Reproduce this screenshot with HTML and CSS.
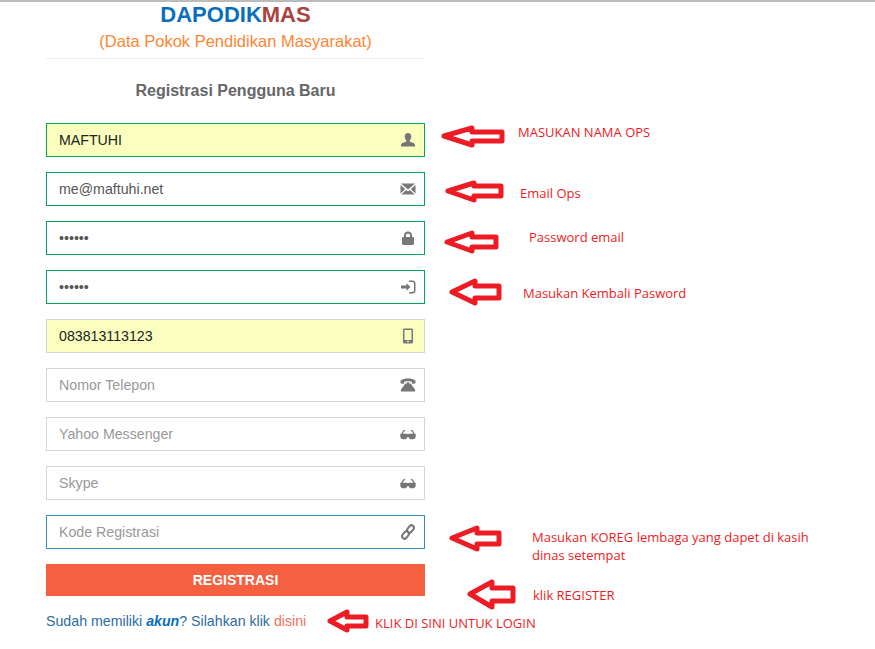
FILE: index.html
```html
<!DOCTYPE html>
<html lang="en">
<head>
    <meta charset="UTF-8">
    <title>Registrasi Pengguna Baru | DAPODIKMAS</title>
    <link rel="stylesheet" href="styles.css">
</head>
<body>
    <div class="page">
        <div class="register-box">
            <div class="logo">
                <div class="logo-name"><span class="blue">DAPODIK</span><span class="maroon">MAS</span></div>
                <div class="logo-sub">(Data Pokok Pendidikan Masyarakat)</div>
            </div>
            <h2 class="box-title">Registrasi Pengguna Baru</h2>

            <div class="form-group">
                <input class="valid autofill" type="text" value="MAFTUHI">
                <svg class="icon" viewBox="0 0 16 16"><path d="M8 1c2.200 0 3.300 1.600 3.300 3.600 0 1.600-.7 3-1.500 3.800v1.300c2 .7 5.200 1.200 5.200 3.300v1.500H1v-1.500c0-2.100 3.200-2.600 5.200-3.300V8.400C5.400 7.600 4.700 6.200 4.700 4.600 4.700 2.600 5.800 1 8 1z"/></svg>
            </div>
            <div class="form-group">
                <input class="valid" type="text" value="me@maftuhi.net">
                <svg class="icon" viewBox="0 0 16 16"><path d="M1 2.500h14L8 8.500zM.5 4v8.500l4.700-4.400zM15.500 4v8.500l-4.700-4.400zM1.200 13.500l5-4.400L8 10.500l1.800-1.400 5 4.400z"/></svg>
            </div>
            <div class="form-group">
                <input class="valid" type="password" value="123456">
                <svg class="icon" viewBox="0 0 16 16"><path fill-rule="evenodd" d="M4 7V5.500C4 3 5.600 1.500 8 1.500S12 3 12 5.500V7h.5c.8 0 1.500.5 1.500 1.300v5.200c0 .8-.7 1.500-1.500 1.500h-9C2.700 15 2 14.300 2 13.500V8.300C2 7.500 2.700 7 3.500 7zM6 7h4V5.500C10 4.200 9.200 3.500 8 3.500S6 4.200 6 5.500z"/></svg>
            </div>
            <div class="form-group">
                <input class="valid" type="password" value="123456">
                <svg class="icon" viewBox="0 0 16 16"><path d="M6.500 4.300 10.500 8l-4 3.700V9.500H1v-3h5.500zM9 1.500h3.500C14.200 1.500 15.500 2.800 15.500 4.500v7c0 1.700-1.300 3-3 3H9V13h3.300c1 0 1.700-.7 1.700-1.700V4.700c0-1-.7-1.700-1.700-1.700H9z"/></svg>
            </div>
            <div class="form-group">
                <input class="autofill" type="text" value="083813113123">
                <svg class="icon" viewBox="0 0 16 16"><path fill-rule="evenodd" d="M4.500 .5h7C12.400 .5 13 1.100 13 2v12c0 .9-.6 1.500-1.500 1.500h-7C3.600 15.500 3 14.900 3 14V2C3 1.100 3.600 .5 4.500 .5zM4.500 2v10h7V2zM7.200 12.800v1.400h1.600v-1.400z"/></svg>
            </div>
            <div class="form-group">
                <input type="text" placeholder="Nomor Telepon">
                <svg class="icon" viewBox="0 0 16 16"><path d="M8 1.500c3 0 5.700.6 7.200 2 .5.500.5 2.200 0 3l-3.200.2-.5-2.200C10 4 6 4 4.500 4.500L4 6.700.8 6.500C.3 5.700.3 4 .8 3.500 2.300 2.100 5 1.500 8 1.500zM5.500 6.500h1.300V5.200h2.400v1.300h1.300L15 12.500v2H1v-2z"/></svg>
            </div>
            <div class="form-group">
                <input type="text" placeholder="Yahoo Messenger">
                <svg class="icon" viewBox="0 0 16 16"><path d="M.3 7.700h6.500c.5 0 1 .2 1.200.5.200-.3.700-.5 1.200-.5h6.500v2.800c0 1.500-1.100 2.800-2.700 2.800h-1.500c-1.500 0-2.600-1-3-2.400h-1c-.4 1.400-1.500 2.400-3 2.400H3c-1.600 0-2.700-1.300-2.700-2.800zM1.300 7.700 3 4.700C3.400 4 4.200 3.800 5.200 4.100v1.200c-.7-.2-1-.1-1.200.3L2.800 7.700zM14.700 7.700 13 4.700c-.4-.7-1.200-.9-2.200-.6v1.200c.7-.2 1-.1 1.200.3l1.200 2.100z"/></svg>
            </div>
            <div class="form-group">
                <input type="text" placeholder="Skype">
                <svg class="icon" viewBox="0 0 16 16"><path d="M.3 7.700h6.500c.5 0 1 .2 1.200.5.200-.3.700-.5 1.200-.5h6.500v2.800c0 1.500-1.100 2.800-2.700 2.800h-1.500c-1.500 0-2.600-1-3-2.400h-1c-.4 1.400-1.500 2.400-3 2.400H3c-1.600 0-2.700-1.300-2.700-2.800zM1.300 7.700 3 4.700C3.400 4 4.200 3.800 5.200 4.100v1.200c-.7-.2-1-.1-1.200.3L2.800 7.700zM14.700 7.700 13 4.700c-.4-.7-1.200-.9-2.200-.6v1.200c.7-.2 1-.1 1.200.3l1.200 2.100z"/></svg>
            </div>
            <div class="form-group">
                <input class="focus" type="text" placeholder="Kode Registrasi">
                <svg class="icon icon-line" viewBox="0 0 16 16"><rect x="6.500" y="2.500" width="8" height="5" rx="2.500" transform="rotate(-52 10.500 5)"/><rect x="1.500" y="8.500" width="8" height="5" rx="2.500" transform="rotate(-52 5.500 11)"/></svg>
            </div>

            <button class="btn-register">REGISTRASI</button>
            <div class="login-link">Sudah memiliki <b><i>akun</i></b>? Silahkan klik <a href="#">disini</a></div>
        </div>

        <svg class="arrows" viewBox="0 0 875 649">
            <path d="M444 136 472 128V132H502V141H472V145Z"/>
            <path d="M448 191 474 183V186H501V196H474V200Z"/>
            <path d="M447 242 472 233V237H496V247H472V251Z"/>
            <path d="M452 292 475 281V286H499V298H475V303Z"/>
            <path d="M452 538 477 528V533H499V544H477V549Z"/>
            <path d="M470 594 492 582V588H513V601H492V607Z"/>
            <path d="M330 621 347 612V617H366V626H347V630Z"/>
        </svg>

        <div class="note note-nama">MASUKAN NAMA OPS</div>
        <div class="note note-email">Email Ops</div>
        <div class="note note-pass">Password email</div>
        <div class="note note-ulang">Masukan Kembali Pasword</div>
        <div class="note note-koreg">Masukan KOREG lembaga yang dapet di kasih<br>dinas setempat</div>
        <div class="note note-klik">klik REGISTER</div>
        <div class="note note-login">KLIK DI SINI UNTUK LOGIN</div>
    </div>
</body>
</html>
```

FILE: styles.css
```css
:root {
    --blue: #0a6ebd;
    --maroon: #a94442;
    --red-note: #ed1c24;
}
* {
    box-sizing: border-box;
}
body {
    margin: 0;
    background: white;
    font-family: 'Liberation Sans', Arial, sans-serif;
    font-size: 14.2px;
    color: #555;
}
.page {
    position: relative;
    width: 875px;
    height: 649px;
    overflow: hidden;
    border-top: 2px solid #bbb;
    padding-left: 46px;
}
.register-box {
    width: 379px;
}
.logo {
    height: 57px;
    border-bottom: 1px solid #eee;
    text-align: center;
}
.logo-name {
    font-size: 22px;
    font-weight: bold;
    line-height: 26px;
}
.blue {
    color: var(--blue);
}
.maroon {
    color: var(--maroon);
}
.logo-sub {
    font-size: 16.5px;
    line-height: 20px;
    margin-top: 3px;
    color: #ff8533;
}
.box-title {
    margin: 0;
    padding: 22px 0 22px;
    font-size: 16px;
    line-height: 20px;
    text-align: center;
    color: #666;
}
.form-group {
    position: relative;
    margin-bottom: 15px;
}
input {
    display: block;
    width: 100%;
    height: 34px;
    padding: 6px 12px;
    border: 1px solid #d2d6de;
    font-family: inherit;
    font-size: 14.2px;
    color: #555;
    outline: none;
}
input::placeholder {
    color: #999;
}
input.valid {
    border-color: #00a65a;
}
input.focus {
    border-color: #3c8dbc;
}
input.autofill {
    background: #faffbd;
    color: #222;
}
.icon {
    position: absolute;
    top: 9px;
    right: 9px;
    width: 16px;
    height: 16px;
    fill: #777;
}
.icon-line {
    fill: none;
    stroke: #777;
    stroke-width: 2;
}
.btn-register {
    display: block;
    width: 100%;
    height: 32px;
    border: none;
    background: #f46040;
    color: white;
    font-family: inherit;
    font-size: 14px;
    font-weight: bold;
    cursor: pointer;
}
.login-link {
    margin-top: 15px;
    line-height: 20px;
    color: #2d6ca2;
}
.login-link b {
    color: var(--blue);
}
.login-link a {
    color: #f0705a;
    text-decoration: none;
}
.arrows {
    position: absolute;
    top: -2px;
    left: 0;
    width: 875px;
    height: 649px;
    fill: white;
    stroke: var(--red-note);
    stroke-width: 5;
    stroke-linejoin: round;
}
.note {
    position: absolute;
    font-family: 'Open Sans', sans-serif;
    font-size: 13px;
    line-height: 18px;
    color: var(--red-note);
    white-space: nowrap;
}
.note-nama { left: 518px; top: 121px; }
.note-email { left: 520px; top: 182px; }
.note-pass { left: 529px; top: 226px; }
.note-ulang { left: 523px; top: 282px; }
.note-koreg { left: 532px; top: 526px; }
.note-klik { left: 533px; top: 584px; }
.note-login { left: 375px; top: 612px; }
```
